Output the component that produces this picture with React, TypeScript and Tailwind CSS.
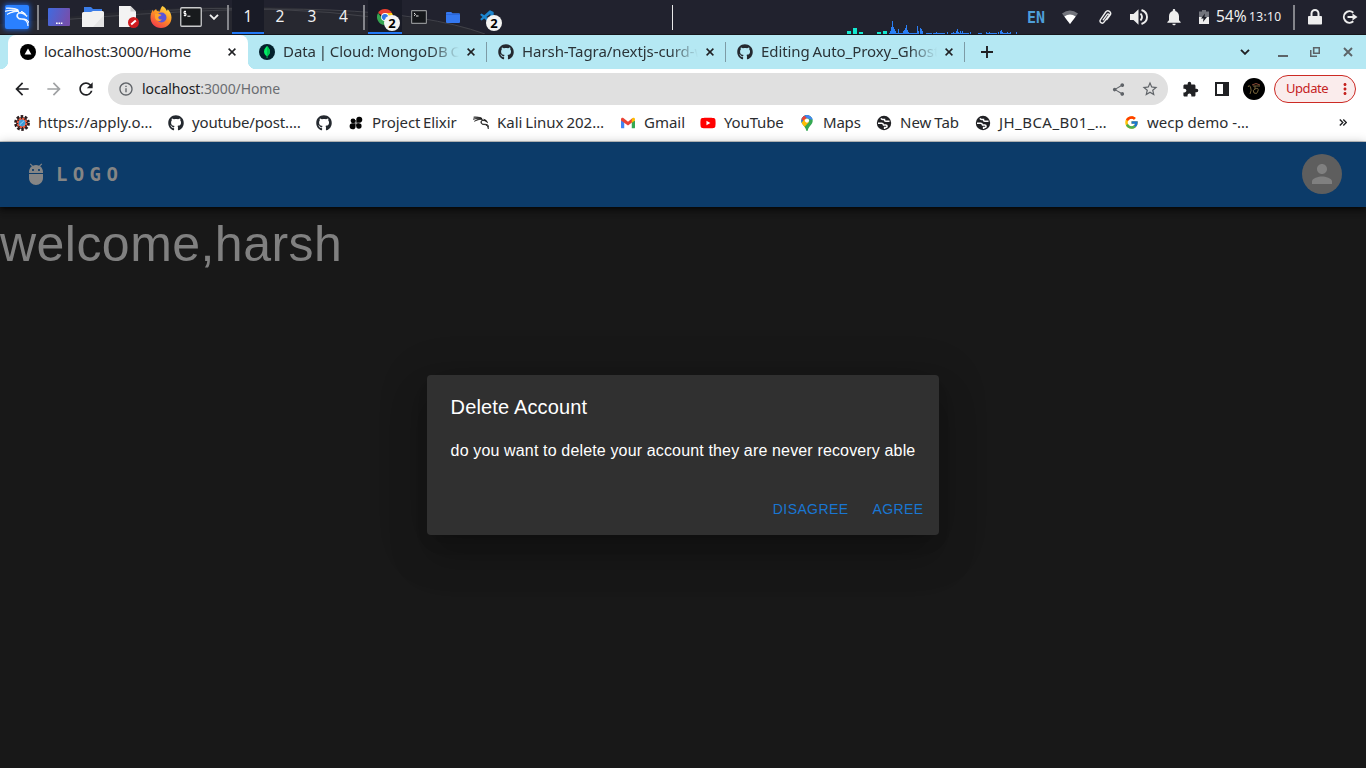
import React from 'react';
import { FaGithub, FaYoutube } from 'react-icons/fa';
import { FcGoogle } from 'react-icons/fc';
import { SiKalilinux, SiMongodb } from 'react-icons/si';
import { BiLogoVisualStudio } from 'react-icons/bi';
import {
  MdAdb,
  MdArrowBack,
  MdArrowForward,
  MdExtension,
  MdInfoOutline,
  MdMoreVert,
  MdNotifications,
  MdPerson,
  MdRefresh,
  MdShare,
  MdStarOutline,
} from 'react-icons/md';

/* ---------- small drawings ---------- */

const Cross = ({ className = '' }: { className?: string }) => (
  <svg viewBox="0 0 8 8" className={`h-2 w-2 shrink-0 ${className}`}>
    <path d="M.6.6l6.8 6.8M7.4.6L.6 7.4" stroke="currentColor" strokeWidth="1.5" />
  </svg>
);

const Chevron = () => (
  <svg viewBox="0 0 10 6" className="h-1.5 w-2.5 shrink-0">
    <path d="M1 .8l4 4 4-4" fill="none" stroke="currentColor" strokeWidth="1.9" />
  </svg>
);

const DesktopIcon = () => (
  <svg viewBox="0 0 22 18" className="h-[18px] w-[22px]">
    <defs>
      <linearGradient id="desk" x1="0" y1="0" x2="1" y2="0.3">
        <stop offset="0" stopColor="#3f6be0" />
        <stop offset="1" stopColor="#7450ae" />
      </linearGradient>
    </defs>
    <rect width="22" height="18" rx="1" fill="url(#desk)" />
    <path d="M8 15.2h1.700M10.500 15.2h1.700M13 15.200h1.400" stroke="#fff" strokeWidth="1.500" />
  </svg>
);

const FilesIcon = () => (
  <svg viewBox="0 0 22 20" className="h-5 w-[22px]">
    <path d="M2 0h7l2 2h9v6H2z" fill="#3b7de8" />
    <path d="M0 6.500q0-1.500 1.500-1.500H9l2-1h9.500q1.500 0 1.500 1.500V20H0z" fill="#f1f1f1" />
    <path d="M11 20L22 8v12z" fill="#e4e4e4" />
  </svg>
);

const DocIcon = () => (
  <svg viewBox="0 0 20 22" className="h-[22px] w-5">
    <path d="M0 0h11.500L17 5.500V21H0z" fill="#f3f3f3" />
    <path d="M11.500 0v5.500H17z" fill="#cfcfcf" />
    <circle cx="14.500" cy="16.500" r="5.500" fill="#d01c1f" />
    <path d="M12.200 18.600l4.600-4.200" stroke="#fff" strokeWidth="2" />
  </svg>
);

const FirefoxIcon = () => (
  <svg viewBox="0 0 22 22" className="h-[22px] w-[22px]">
    <defs>
      <linearGradient id="fox" x1="0.8" y1="0" x2="0.2" y2="1">
        <stop offset="0" stopColor="#ffe14a" />
        <stop offset="0.450" stopColor="#ff9522" />
        <stop offset="1" stopColor="#f0344f" />
      </linearGradient>
    </defs>
    <path
      d="M12.500 0c3 1.500 3.800 3.300 4 4.800 1-.3 1.200-1 1.200-1.600 2.600 2.500 3.800 5.400 3.800 8.300C21.500 17.500 17 22 11 22S.500 17.500.500 11.500c0-3 1-5.800 2.300-7.800l.8 2C4.300 4.300 5.300 3.400 6.200 3c0 .8.300 1.500.8 2 1 .1 2 .1 3 .5C10.200 3.300 11 1.300 12.500 0z"
      fill="url(#fox)"
    />
    <circle cx="11.500" cy="11.500" r="5" fill="#5a55d8" />
    <path d="M5 7.500c2 .5 3.500-.5 6.500 1.500-1.200 1.200-2.500.8-3.300 2.200.3 1.600 1.700 2.800 3.600 2.300-2 2.800-6.800 1.500-6.800-2.300z" fill="#ffa32b" />
  </svg>
);

const TerminalIcon = () => (
  <svg viewBox="0 0 22 20" className="h-5 w-[22px]">
    <rect x=".75" y=".75" width="20.500" height="18.500" rx="1" fill="#181a1d" stroke="#c9cacc" strokeWidth="1.300" />
    <path d="M6 4.500H4v2h2v2H3.800M5 3.600v5.800M7.400 9.200h3" fill="none" stroke="#fff" strokeWidth="1" />
  </svg>
);

const SmallTerminal = () => (
  <svg viewBox="0 0 16 14" className="h-3.5 w-4">
    <rect x=".6" y=".6" width="14.800" height="12.800" rx=".6" fill="#16181b" stroke="#8f9193" strokeWidth="1.200" />
    <path d="M3 3l1.500 1.400L3 5.800M5 6h2.500" fill="none" stroke="#eee" strokeWidth="1" />
  </svg>
);

const SmallFolder = () => (
  <svg viewBox="0 0 14 11" className="h-[11px] w-3.5">
    <path d="M0 1q0-1 1-1h4.200l1.300 1.200H13q1 0 1 1V10q0 1-1 1H1q-1 0-1-1z" fill="#3478f0" />
    <path d="M0 2.500h14" stroke="#2862d6" strokeWidth=".8" />
  </svg>
);

const ChromeIcon = () => (
  <svg viewBox="0 0 16 16" className="h-4 w-4">
    <path d="M8 8L1.070 4A8 8 0 0 1 14.930 4z" fill="#e8402f" />
    <path d="M8 8V4h6.930A8 8 0 0 1 8 16z" fill="#fdc813" />
    <path d="M8 8l2.500 3L8 16A8 8 0 0 1 1.070 4L5 9z" fill="#35a551" />
    <circle cx="8" cy="8" r="3.900" fill="#fff" />
    <circle cx="8" cy="8" r="3.100" fill="#2f78e6" />
  </svg>
);

const NextIcon = () => (
  <svg viewBox="0 0 16 16" className="h-4 w-4 shrink-0">
    <circle cx="8" cy="8" r="8" fill="#000" />
    <path d="M8 4.600l3.400 6H4.600z" fill="#fff" />
  </svg>
);

const MongoIcon = () => (
  <span className="flex h-4 w-4 shrink-0 items-center justify-center rounded-full bg-[#04202c]">
    <svg viewBox="0 0 6 12" className="h-3 w-1.5">
      <path d="M3 0c.5 1 3 2.600 3 5.400C6 8 4.300 9.300 3.300 10v2h-.6v-2C1.700 9.300 0 8 0 5.400 0 2.600 2.500 1 3 0z" fill="#00ed64" />
      <path d="M3 0c.5 1 3 2.600 3 5.400C6 8 4.300 9.300 3.300 10v2H3z" fill="#00c353" />
    </svg>
  </span>
);

const WifiIcon = () => (
  <svg viewBox="0 0 16 14" className="h-3.5 w-4">
    <path d="M0 3.500Q8-2.500 16 3.500L8 14z" fill="#72747c" />
    <path d="M2.300 6.500q5.700-4 11.400 0L8 14z" fill="#fff" />
  </svg>
);

const ClipIcon = () => (
  <svg viewBox="0 0 14 16" className="h-4 w-3.5">
    <path
      d="M5.200 10.800l4-5.400c.9-1.200 2.500 0 1.600 1.300l-4.800 6.500c-1.700 2.200-5.200-.2-3.500-2.600L7.700 3c2.100-2.800 6.400.2 4.400 3.100l-3.300 4.500"
      fill="none"
      stroke="#eee"
      strokeWidth="1.400"
      strokeLinecap="round"
    />
  </svg>
);

const SpeakerIcon = () => (
  <svg viewBox="0 0 18 16" className="h-4 w-[18px]">
    <path d="M0 5h3.500L8.500.300v15.400L3.500 11H0z" fill="#eee" />
    <path d="M10.500 4.500q3 3.500 0 7" fill="none" stroke="#eee" strokeWidth="1.900" />
    <path d="M11.500 1q5.500 2 5.500 7t-5.500 7" fill="none" stroke="#eee" strokeWidth="1.900" />
  </svg>
);

const BatteryIcon = () => (
  <svg viewBox="0 0 10 14" className="h-3.5 w-2.5">
    <path d="M0 1.500h3V0h4v1.500h3V7H0z" fill="#72747c" />
    <path d="M0 7h10v7H0z" fill="#eee" />
    <path d="M6 3.500L2 8.500h2.500L4 12l4-5H5.500z" fill="#1b1c25" />
  </svg>
);

const LockIcon = () => (
  <svg viewBox="0 0 14 16" className="h-4 w-3.5">
    <path d="M3.500 8V4.500a3.500 3.500 0 0 1 7 0V8" fill="none" stroke="#eee" strokeWidth="2" />
    <rect y="7" width="14" height="8.500" rx=".8" fill="#eee" />
  </svg>
);

const LogoutIcon = () => (
  <svg viewBox="0 0 16 14" className="h-3.5 w-4">
    <path d="M11.300 2.700A5.700 5.700 0 1 0 11.300 11.300" fill="none" stroke="#eee" strokeWidth="2" />
    <path d="M5.500 7h6" stroke="#eee" strokeWidth="2" />
    <path d="M10.500 3.500L15.500 7l-5 3.500z" fill="#eee" />
  </svg>
);

const KaliMark = () => (
  <span className="flex h-6 w-6 items-center justify-center rounded-[2px] bg-[#2a80ff] shadow-[0_0_5px_1px_#1d5fd0]">
    <SiKalilinux className="h-[24px] w-[24px] stroke-white stroke-[0.8] text-white" />
  </span>
);

const GearIcon = () => (
  <svg viewBox="0 0 16 16" className="h-4 w-4">
    <circle cx="8" cy="8" r="6.500" fill="none" stroke="#2b1d1f" strokeWidth="2.800" strokeDasharray="2.500 1.580" />
    <circle cx="8" cy="8" r="4.700" fill="none" stroke="#2b1d1f" strokeWidth="2.400" />
    <circle cx="8" cy="8" r="4.300" fill="none" stroke="#ee5a3e" strokeWidth="2" strokeDasharray="2.400 .900" />
    <circle cx="8" cy="8" r="3.200" fill="#3d9bd8" />
    <path d="M6 9.500L9.800 6" stroke="#9ad8ff" strokeWidth="1" />
  </svg>
);

const CloverIcon = () => (
  <svg viewBox="0 0 16 16" className="h-4 w-4" fill="#050505">
    <circle cx="5" cy="5.800" r="2.400" />
    <path d="M8.300 7.700V5a3 3 0 1 1 3 2.700z" />
    <path d="M7.600 8.300v2.900a3 3 0 1 1-3-2.900z" />
    <path d="M4.600 5h3v2.700h-3z" />
    <circle cx="10.900" cy="11" r="2.700" />
    <path d="M8.300 8.400h2.600v2.600H8.300z" />
  </svg>
);

const GmailIcon = () => (
  <svg viewBox="0 0 16 12" className="h-3 w-3.5">
    <path d="M1 3.500h2.700V12H1.200Q0 12 0 11V2z" fill="#4285f4" />
    <path d="M12.300 3.500H16V11q0 1-1.200 1h-2.500z" fill="#34a853" />
    <path d="M0 1.700C0 .300 1.600-.400 2.700.400L8 4.500 13.300.400v4.400L8 8.900 0 3.200z" fill="#ea4335" />
    <path d="M12.300 1.200l1-.8C14.400-.400 16 .300 16 1.700v1.500l-3.700 2.600z" fill="#fbbc04" />
  </svg>
);

const MapsIcon = () => (
  <svg viewBox="0 0 12 16" className="h-4 w-3">
    <defs>
      <clipPath id="pin">
        <path d="M6 0a5.700 5.700 0 0 1 5.700 5.700C11.700 9.500 8 10.500 6.700 15.400q-.7 1.200-1.400 0C4 10.500.300 9.500.300 5.700A5.700 5.700 0 0 1 6 0z" />
      </clipPath>
    </defs>
    <g clipPath="url(#pin)">
      <rect width="12" height="16" fill="#34a853" />
      <path d="M0 0h8L0 9z" fill="#1a73e8" />
      <path d="M0 0v4l3 2.500L6 3 3 0z" fill="#ea4335" />
      <path d="M5 0h7v5L8 4 4.500 2z" fill="#4285f4" />
      <path d="M0 8l4-4 4 3-5.500 6z" fill="#fbbc04" />
    </g>
    <circle cx="6" cy="5.600" r="2.100" fill="#fff" />
  </svg>
);

const GlobeIcon = () => (
  <svg viewBox="0 0 16 16" className="h-4 w-4">
    <circle cx="8" cy="8" r="7.200" fill="#202124" />
    <path
      d="M2 8.300h3.600q1.500 0 1.900 1.600h2.200q1.400 0 1.400 1.400 0 1.200-1.300 1.200H8.600v1.400M13.500 6.200H9.800Q8.500 6.200 8.500 5V4.400H6.700Q5.400 4.400 5 3.400"
      fill="none"
      stroke="#fff"
      strokeWidth="1.500"
    />
  </svg>
);

const RestoreIcon = () => (
  <svg viewBox="0 0 10 10" className="h-2.5 w-2.5">
    <path d="M3.700.700h5.600v5.600H3.700z" fill="none" stroke="#5c6468" strokeWidth="1.600" />
    <path d="M.700 3v6.300H7" fill="none" stroke="#5c6468" strokeWidth="1.600" />
  </svg>
);

/* ---------- desktop panel ---------- */

const spikes: [number, number][] = [
  [35, 3], [36, 7], [37, 13], [38, 7], [39, 5], [40, 3], [43, 5], [48, 3], [49, 4], [50, 6], [51, 9], [52, 4],
  [53, 2], [62, 8], [63, 3], [65, 6], [66, 5], [67, 3], [81, 2], [92, 2], [98, 2], [101, 3], [102, 5], [103, 2], [105, 3],
  [107, 3], [115, 2], [131, 2], [134, 2], [143, 2], [145, 3], [146, 4], [147, 2], [152, 2], [155, 2], [161, 2],
];

const LoadGraph = () => (
  <svg viewBox="0 0 172 14" className="h-3.5 w-[172px]" shapeRendering="crispEdges">
    <g fill="#13e8d0">
      <rect x="0" y="11" width="4" height="3" />
      <rect x="6" y="8" width="4" height="6" />
      <rect x="12" y="12" width="4" height="2" />
      <rect x="30" y="12" width="4" height="2" />
      <rect x="36" y="11" width="4" height="3" />
    </g>
    <g fill="#2b7ff5">
      {spikes.map(([x, h]) => (
        <rect key={x} x={x + 8} y={14 - h} width="1" height={h} />
      ))}
    </g>
    <path d="M42 13.500h29M79 13.500h6M86 13.500h12M104 13.500h18M131 13.500h4M140 13.500h10M154 13.500h9" stroke="#2b7ff5" strokeWidth="1" />
  </svg>
);

const Divider = () => <span className="h-[25px] w-0.5 shrink-0 bg-[#84858b]" />;

const CountBadge = () => (
  <span className="absolute -right-[7px] -bottom-[6px] flex h-4 w-4 items-center justify-center rounded-full bg-[#f4f4f2] text-[13px] leading-none font-bold text-black">
    2
  </span>
);

const Panel = () => (
  <header className="relative flex h-[35px] items-center border-b border-[#15161b] bg-[#21222e] text-[#f0f0f0]">
    <svg viewBox="0 0 520 34" className="absolute top-0 left-0 h-[34px] w-[520px]">
      <path d="M40 20Q200 0 330 10T485 34H0V24z" fill="#272830" />
      <path d="M60 20Q230 6 330 10T485 34M150 11q120-8 240 8" fill="none" stroke="#44454c" strokeWidth=".9" />
    </svg>
    <div className="relative flex h-[34px] w-full items-center">
      <div className="flex w-[37px] pl-[5px]"><KaliMark /></div>
      <Divider />
      <div className="flex w-[43px] pl-[9px]"><DesktopIcon /></div>
      <div className="flex w-9"><FilesIcon /></div>
      <div className="flex w-8 pl-px"><DocIcon /></div>
      <div className="flex w-[30px]"><FirefoxIcon /></div>
      <div className="flex w-7"><TerminalIcon /></div>
      <div className="flex w-[19px] pl-px"><Chevron /></div>
      <Divider />
      <div className="ml-[3px] flex h-full text-[15.5px]">
        <span className="flex w-8 items-center justify-center border-b-2 border-[#2178f5] bg-[#191b26] pt-0.5">1</span>
        <span className="flex w-8 items-center justify-center">2</span>
        <span className="flex w-8 items-center justify-center">3</span>
        <span className="flex w-[31px] items-center justify-center">4</span>
      </div>
      <span className="ml-[4px] flex"><Divider /></span>
      <div className="ml-[3px] flex h-full w-[34px] items-center justify-center border-b-2 border-[#2178f5] bg-[#191b26]">
        <span className="relative mt-0.5"><ChromeIcon /><CountBadge /></span>
      </div>
      <div className="flex w-[35px] pl-[9px]"><SmallTerminal /></div>
      <div className="flex w-[42px] pl-[9px]"><SmallFolder /></div>
      <div className="flex w-[193px]">
        <span className="relative h-4 w-4">
          <BiLogoVisualStudio className="h-4 w-4 text-[#1c86cf]" />
          <CountBadge />
        </span>
      </div>
      <span className="h-[25px] w-px bg-[#e8e8e8]" />
      <div className="ml-[174px] flex h-full w-[180px] items-end"><LoadGraph /></div>
      <div className="flex w-[35px] pt-0.5 font-['DejaVu_Sans_Mono',monospace] text-[15px] leading-none font-bold text-[#4e9ed9]">EN</div>
      <div className="flex w-9"><WifiIcon /></div>
      <div className="flex w-8"><ClipIcon /></div>
      <div className="flex w-[34px]"><SpeakerIcon /></div>
      <div className="flex w-[35px]"><MdNotifications className="h-5 w-5 text-[#eee]" /></div>
      <div className="flex w-[17px]"><BatteryIcon /></div>
      <div className="w-[33px] text-[15.5px] leading-none">54%</div>
      <div className="w-[44px] text-[12px] leading-none tracking-[0.35px]">13:10</div>
      <Divider />
      <div className="flex w-[47px] pl-[13px]"><LockIcon /></div>
      <LogoutIcon />
    </div>
  </header>
);

/* ---------- browser chrome ---------- */

const Tab = ({ icon, title }: { icon: React.ReactNode; title: string }) => (
  <div className="flex h-full w-[239px] shrink-0 items-center pl-[11px]">
    {icon}
    <span className="mb-0.5 ml-2 w-44 overflow-hidden [mask-image:linear-gradient(to_right,black_148px,transparent_176px)] tracking-[-0.07px] [word-spacing:-1px] whitespace-nowrap">
      {title}
    </span>
    <Cross className="ml-2 text-[#202124]" />
    <span className="ml-[11px] h-5 w-px bg-[#7d9ba5]" />
  </div>
);

const GithubIcon = () => <FaGithub className="h-4 w-4 shrink-0 text-[#24292f]" />;

const TabStrip = () => (
  <div className="flex h-[34px] items-center bg-[#b5e8f3] pl-2 text-[15px] text-[#2b3438]">
    <div className="relative flex h-full w-60 shrink-0 items-center rounded-t-lg bg-white pl-3 text-[#27292c]">
      <NextIcon />
      <span className="mb-0.5 ml-2 w-44 tracking-[-0.16px] whitespace-nowrap">localhost:3000/Home</span>
      <Cross className="ml-2 text-[#202124]" />
      <span className="absolute bottom-0 -left-2 h-2 w-2 bg-[radial-gradient(circle_at_0_0,transparent_8px,white_8.5px)]" />
      <span className="absolute -right-2 bottom-0 h-2 w-2 bg-[radial-gradient(circle_at_100%_0,transparent_8px,white_8.5px)]" />
    </div>
    <Tab icon={<MongoIcon />} title="Data | Cloud: MongoDB Cl" />
    <Tab icon={<GithubIcon />} title="Harsh-Tagra/nextjs-curd-w" />
    <Tab icon={<GithubIcon />} title="Editing Auto_Proxy_Ghost" />
    <svg viewBox="0 0 12 12" className="ml-4 h-3 w-3 shrink-0">
      <path d="M6 0v12M0 6h12" stroke="#202124" strokeWidth="1.900" />
    </svg>
    <div className="mr-[13px] ml-auto flex items-center text-[#202124]">
      <Chevron />
      <span className="mt-2 ml-7 h-0.5 w-2.5 bg-[#5c6468]" />
      <span className="ml-[22px]"><RestoreIcon /></span>
      <svg viewBox="0 0 10 10" className="ml-[23px] h-2.5 w-2.5">
        <path d="M1 1l8 8M9 1L1 9" stroke="#5c6468" strokeWidth="1.900" />
      </svg>
    </div>
  </div>
);

const Toolbar = () => (
  <div className="flex h-10 items-center bg-white text-[#202124]">
    <div className="ml-1.5 flex w-8 justify-center"><MdArrowBack className="h-5 w-5" /></div>
    <div className="flex w-8 justify-center"><MdArrowForward className="h-5 w-5 text-[#a0a2a4]" /></div>
    <div className="flex w-8 justify-center"><MdRefresh className="h-5 w-5" /></div>
    <div className="ml-1.5 flex h-8 w-[1060px] items-center rounded-full bg-[#e0e0e0] pl-2.5 text-[14px]">
      <MdInfoOutline className="h-4 w-4 text-[#5f6368]" />
      <span className="mb-px ml-2 tracking-[-0.1px] text-[#202124]">
        localhost<span className="text-[#6b6e72]">:3000/Home</span>
      </span>
      <MdShare className="mr-[15px] ml-auto h-[15px] w-[15px] text-[#5f6368]" />
      <MdStarOutline className="mr-[9px] h-[18px] w-[18px] text-[#5f6368]" />
    </div>
    <MdExtension className="ml-3.5 h-[17px] w-[17px]" />
    <span className="ml-4 h-3.5 w-3.5 border-2 border-r-[6px] border-[#202124]" />
    <span className="ml-3.5 flex h-[22px] w-[22px] items-center justify-center rounded-full bg-black">
      <svg viewBox="0 0 14 12" className="h-3 w-3.5" fill="none" stroke="#77653a" strokeWidth="1">
        <path d="M1 4q1-3 2.500 0T3 11M6 3h7M8 3v3q-3 1-1 4 3 2 4-2t-3-2" />
        <path d="M5 2q4-3 8 0" stroke="#8a4a35" />
      </svg>
    </span>
    <div className="ml-[9px] flex h-7 w-[82px] items-center rounded-full border border-[#cc2a24] bg-[#faecec] pl-[11px] text-[13px] tracking-[-0.45px] text-[#c5221f]">
      Update
      <MdMoreVert className="mr-px ml-auto h-[18px] w-[18px]" />
    </div>
  </div>
);

const bookmarks: { cell: string; track?: string; icon: React.ReactNode; label: string }[] = [
  { cell: 'w-[154px]', icon: <GearIcon />, label: 'https://apply.o…' },
  { cell: 'w-[148px]', track: 'tracking-[-0.15px]', icon: <GithubIcon />, label: 'youtube/post.…' },
  { cell: 'w-8', icon: <GithubIcon />, label: '' },
  { cell: 'w-[125px]', track: 'tracking-[-0.1px] [word-spacing:-1px]', icon: <CloverIcon />, label: 'Project Elixir' },
  {
    cell: 'w-[147px]',
    track: '[word-spacing:-1px]',
    icon: <SiKalilinux className="h-4 w-4 stroke-[#111] stroke-[0.9] text-[#111]" />,
    label: 'Kali Linux 202…',
  },
  { cell: 'w-20', icon: <GmailIcon />, label: 'Gmail' },
  { cell: 'w-[99px]', track: 'tracking-[-0.15px]', icon: <FaYoutube className="h-[18px] w-4 text-[#f00]" />, label: 'YouTube' },
  { cell: 'w-[77px]', track: 'tracking-[-0.2px]', icon: <MapsIcon />, label: 'Maps' },
  { cell: 'w-[99px]', track: '[word-spacing:-1px]', icon: <GlobeIcon />, label: 'New Tab' },
  { cell: 'w-[148px]', track: 'tracking-[0.45px]', icon: <GlobeIcon />, label: 'JH_BCA_B01_…' },
  { cell: 'w-[220px]', icon: <FcGoogle className="h-[15px] w-[15px]" />, label: 'wecp demo -…' },
];

const BookmarkBar = () => (
  <nav className="flex h-[33px] items-center border-b border-[#c9cbcc] bg-white pb-[5px] pl-3.5 text-[15px] text-[#2b2d30]">
    {bookmarks.map((b, i) => (
      <div key={i} className={`flex shrink-0 items-center whitespace-nowrap ${b.cell}`}>
        <span className="flex w-4 justify-center">{b.icon}</span>
        <span className={`mb-px ml-2 ${b.track ?? ''}`}>{b.label}</span>
      </div>
    ))}
    <svg viewBox="0 0 8 7" className="-ml-1 h-[7px] w-2 shrink-0">
      <path d="M.8.500l3 3-3 3M4.300.500l3 3-3 3" fill="none" stroke="#202124" strokeWidth="1.400" />
    </svg>
  </nav>
);

/* ---------- page ---------- */

const AppBar = () => (
  <div className="relative flex h-[65px] shrink-0 items-center bg-[#0c3b69] px-6 pb-px text-[#858585] shadow-[0_2px_4px_-1px_rgba(0,0,0,0.5),0_4px_5px_rgba(0,0,0,0.3),0_1px_10px_rgba(0,0,0,0.25)]">
    <MdAdb className="h-6 w-6" />
    <span className="ml-2 font-['DejaVu_Sans_Mono',monospace] text-[19px] leading-none font-bold tracking-[5.36px]">LOGO</span>
    <span className="ml-auto flex h-10 w-10 items-center justify-center rounded-full bg-[#5e5e5e]">
      <MdPerson className="h-[30px] w-[30px] text-[#808080]" />
    </span>
  </div>
);

const DeleteDialog = () => (
  <div
    role="dialog"
    className="rounded bg-[#303030] text-white shadow-[0_11px_15px_-7px_rgba(0,0,0,0.2),0_24px_38px_3px_rgba(0,0,0,0.14),0_9px_46px_8px_rgba(0,0,0,0.12)]"
  >
    <h2 className="px-6 py-4 text-[20px] leading-8 tracking-[0.15px]">Delete Account</h2>
    <p className="px-6 pb-5 text-[16px] leading-6 tracking-[0.15px] whitespace-nowrap">
      do you want to delete your account they are never recovery able
    </p>
    <div className="flex justify-end gap-2 p-2 text-[14px] leading-[24.5px] tracking-[0.4px] text-[#1976d2]">
      <button className="min-w-16 px-2 py-1.5">DISAGREE</button>
      <button className="min-w-16 px-2 py-1.5">AGREE</button>
    </div>
  </div>
);

export default function App() {
  return (
    <div className="flex h-[768px] w-[1366px] flex-col overflow-hidden font-['Noto_Sans',sans-serif]">
      <Panel />
      <TabStrip />
      <Toolbar />
      <BookmarkBar />
      <main className="relative flex flex-1 flex-col bg-[#181818] font-['Liberation_Sans',Arial,sans-serif]">
        <AppBar />
        <h1 className="mt-[7px] text-[50px] leading-[61px] tracking-[0.46px] text-[#808080]">welcome,harsh</h1>
        <div className="absolute inset-0 flex items-center justify-center">
          <DeleteDialog />
        </div>
      </main>
    </div>
  );
}
